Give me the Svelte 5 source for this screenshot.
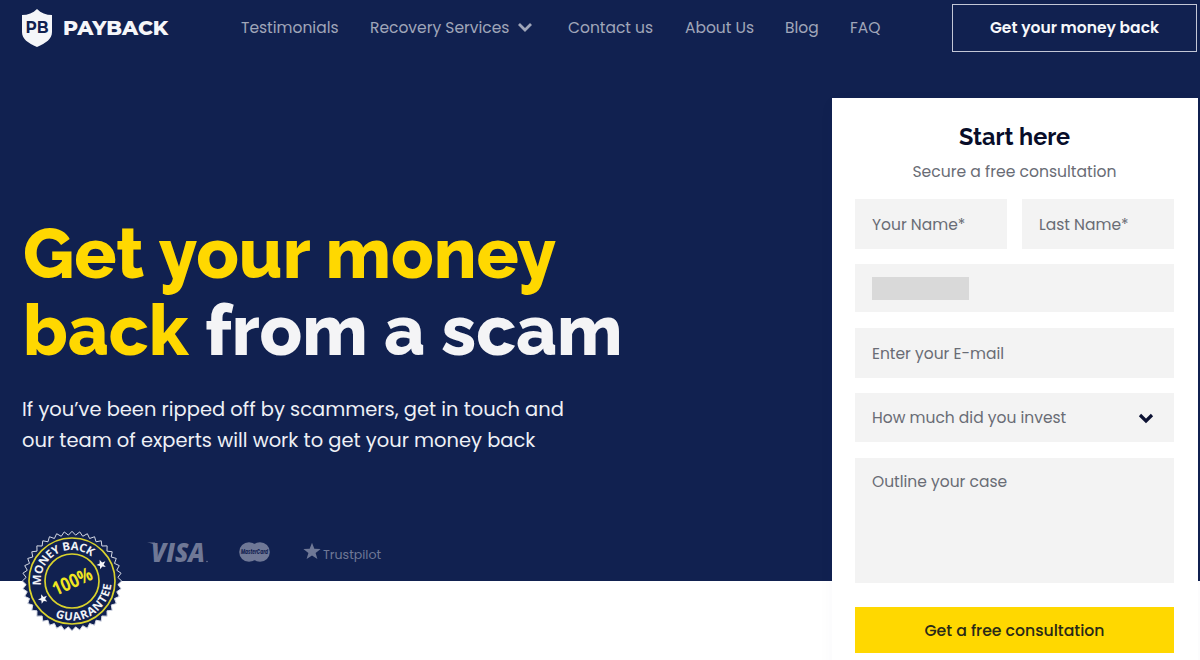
<script>
  const links = [
    { label: 'Testimonials', name: 'testimonials' },
    { label: 'Recovery Services', name: 'services', menu: true },
    { label: 'Contact us', name: 'contact' },
    { label: 'About Us', name: 'about' },
    { label: 'Blog', name: 'blog' },
    { label: 'FAQ', name: 'faq' }
  ];

  let firstName = $state('');
  let lastName = $state('');
  let email = $state('');
  let message = $state('');

  // Wavy edge of the guarantee seal
  function sealEdge(teeth, outer, inner) {
    let d = '';
    for (let i = 0; i < teeth * 2; i++) {
      const angle = (i * Math.PI) / teeth;
      const r = i % 2 ? inner : outer;
      d += `${i ? 'L' : 'M'}${(50 + r * Math.cos(angle)).toFixed(2)} ${(50 + r * Math.sin(angle)).toFixed(2)}`;
    }
    return d + 'Z';
  }

  const star = 'M0-5 1.3-1.6 4.8-1.5 2 .7 3 4 0 2.1-3 4-2 .7-4.8-1.5-1.3-1.6Z';
</script>

<div class="page">
  <div class="hero">
    <header>
      <a class="logo" href="#home">
        <svg width="32" height="40" viewBox="0 0 32 40">
          <path d="M16 1C12 5 7 7 1 7v17c0 7 6 11 15 15 9-4 15-8 15-15V7C25 7 20 5 16 1Z" fill="#f5f6f9" />
          <text x="16" y="24.5" text-anchor="middle" textLength="23" lengthAdjust="spacingAndGlyphs">PB</text>
        </svg>
        <span>PAYBACK</span>
      </a>
      <nav>
        {#each links as link}
          <a class={link.name} href={'#' + link.name}>
            {link.label}
            {#if link.menu}
              <svg width="16" height="12" viewBox="0 0 16 12">
                <path d="M2 3 8 9l6-6" fill="none" stroke="currentColor" stroke-width="2.8" />
              </svg>
            {/if}
          </a>
        {/each}
      </nav>
      <a class="outline-btn" href="#start">Get your money back</a>
    </header>

    <main>
      <section class="intro">
        <h1>
          Get your money<br />
          back <em>from a scam</em>
        </h1>
        <p>
          If you’ve been ripped off by scammers, get in touch and<br />
          our team of experts will work to get your money back
        </p>

        <div class="trust">
          <svg class="seal" width="102" height="102" viewBox="-1 -1 102 102">
            <path d={sealEdge(40, 49.7, 46)} fill="#112150" stroke="#d6dae6" stroke-width="1" stroke-linejoin="round" />
            <g fill="none" stroke="#d9d22c" stroke-width="1.7">
              <circle cx="50" cy="50" r="43" />
              <circle cx="50" cy="50" r="27" />
            </g>
            <g transform="rotate(-30 50 50)">
              <path id="arc-top" d="M19 50a31 31 0 0 1 62 0" fill="none" />
              <path id="arc-bottom" d="M10.5 50a39.5 39.5 0 0 0 79 0" fill="none" />
              <text class="ring-text">
                <textPath href="#arc-top" startOffset="50%" text-anchor="middle" textLength="74">MONEY BACK</textPath>
              </text>
              <text class="ring-text">
                <textPath href="#arc-bottom" startOffset="50%" text-anchor="middle" textLength="76">GUARANTEE</textPath>
              </text>
            </g>
            <path d={star} transform="translate(79.5 33.5) rotate(-22)" fill="#f5f6f9" />
            <path d={star} transform="translate(21 68) rotate(-22)" fill="#f5f6f9" />
            <text class="percent" x="50" y="57" transform="rotate(-24 50 50)" text-anchor="middle" textLength="42" lengthAdjust="spacingAndGlyphs">100%</text>
          </svg>

          <svg class="visa" width="62" height="24" viewBox="0 0 62 24">
            <path d="M0 1.5h8l3 7-1-3C7 3 4 2 0 1.5Z" />
            <text x="4" y="21" textLength="54" lengthAdjust="spacingAndGlyphs">VISA</text>
            <circle cx="60" cy="20.5" r=".8" />
          </svg>

          <svg class="mastercard" width="31" height="20" viewBox="0 0 31 20">
            <circle cx="10" cy="10" r="9.8" />
            <circle cx="21" cy="10" r="9.8" />
            <text x="15.5" y="12.2" text-anchor="middle" textLength="27" lengthAdjust="spacingAndGlyphs">MasterCard</text>
          </svg>

          <div class="trustpilot">
            <svg width="18" height="18" viewBox="-5 -5.2 10 9.6">
              <path d={star} />
            </svg>
            <span>Trustpilot</span>
          </div>
        </div>
      </section>

      <form id="start" onsubmit={(e) => e.preventDefault()}>
        <h2>Start here</h2>
        <p class="subtitle">Secure a free consultation</p>
        <div class="names">
          <input class="field" placeholder="Your Name*" bind:value={firstName} />
          <input class="field" placeholder="Last Name*" bind:value={lastName} />
        </div>
        <div class="field phone"><span></span></div>
        <input class="field email" type="email" placeholder="Enter your E-mail" bind:value={email} />
        <button class="field amount" type="button">
          <span>How much did you invest</span>
          <svg width="16" height="12" viewBox="0 0 16 12">
            <path d="M2 3 8 9l6-6" fill="none" stroke="#0c1233" stroke-width="3.2" />
          </svg>
        </button>
        <textarea class="field" placeholder="Outline your case" bind:value={message}></textarea>
        <button class="submit" type="submit">Get a free consultation</button>
      </form>
    </main>
  </div>
</div>

<style>
  :global(body) {
    background: #fff;
  }

  .page {
    width: 1200px;
    height: 660px;
    overflow: hidden;
    font-family: Poppins, Inter, sans-serif;
  }

  .page,
  .page * {
    box-sizing: border-box;
  }

  .hero {
    height: 581px;
    background: #112150;
  }

  svg {
    flex: none;
    overflow: visible;
  }

  a {
    color: inherit;
    text-decoration: none;
  }

  h1,
  h2,
  p {
    margin: 0;
  }

  header {
    display: flex;
    align-items: center;
    height: 56px;
    padding: 0 3px 0 21px;
  }

  .logo {
    display: flex;
    align-items: center;
    gap: 10px;
    width: 220px;
    color: #f5f6f9;
    font-family: Montserrat, Inter, sans-serif;
    font-size: 20.5px;
    font-weight: 800;
  }

  .logo span {
    margin-top: -2px;
  }

  .logo text {
    fill: #112150;
    font-size: 17px;
    font-weight: 700;
  }

  nav {
    display: grid;
    grid-template-columns: 129px 198px 117px 100px 65px 31px;
    margin-top: -2px;
    color: #a0a6b9;
    font-size: 15.5px;
    white-space: nowrap;
  }

  nav svg {
    margin-left: 3px;
  }

  .outline-btn {
    display: flex;
    align-items: center;
    justify-content: center;
    width: 245px;
    height: 48px;
    margin-left: auto;
    padding-bottom: 2px;
    border: 1px solid #c3c7d6;
    color: #f7f8fb;
    font-size: 15.5px;
    font-weight: 600;
  }

  main {
    display: flex;
    justify-content: space-between;
    padding: 42px 2px 0 22px;
  }

  .intro {
    padding-top: 117px;
    white-space: nowrap;
  }

  h1 {
    padding-left: 1px;
    color: #ffd800;
    font-family: Raleway, Inter, sans-serif;
    font-size: 70px;
    font-weight: 800;
    line-height: 77px;
  }

  h1 em {
    color: #f4f4f6;
    font-style: normal;
  }

  .intro p {
    margin-top: 25px;
    color: #eef0f6;
    font-size: 19.47px;
    line-height: 31px;
  }

  .trust {
    display: flex;
    margin-top: 73px;
  }

  .seal {
    margin: 1px 0 0 -1px;
  }

  .ring-text {
    fill: #f0f2f7;
    font-family: "Open Sans", sans-serif;
    font-size: 11.5px;
    font-weight: 700;
  }

  .percent {
    fill: #f0e51f;
    font-family: "Open Sans", sans-serif;
    font-size: 19px;
    font-weight: 700;
  }

  .visa,
  .mastercard,
  .trustpilot {
    color: #6f7896;
    fill: #6f7896;
  }

  .visa {
    margin: 12px 0 0 24px;
  }

  .visa text {
    font-family: "Open Sans", sans-serif;
    font-size: 27px;
    font-style: italic;
    font-weight: 800;
  }

  .mastercard {
    margin: 13px 0 0 30px;
  }

  .mastercard text {
    fill: #112150;
    font-size: 6px;
    font-style: italic;
    font-weight: 700;
  }

  .trustpilot {
    display: flex;
    height: 22px;
    margin: 13px 0 0 33px;
    font-size: 12.6px;
  }

  .trustpilot span {
    margin: 5px 0 0 2px;
    line-height: 16px;
  }

  form {
    width: 366px;
    height: 600px;
    padding: 23px 24px 0 23px;
    background: #fff;
    box-shadow: 0 4px 16px rgba(17, 33, 80, 0.03);
    text-align: center;
  }

  h2 {
    color: #080d29;
    font-family: Raleway, Inter, sans-serif;
    font-size: 23.4px;
    font-weight: 700;
    line-height: 32px;
  }

  .subtitle {
    margin-top: 7px;
    color: #696c75;
    font-size: 15.6px;
    line-height: 24px;
  }

  .names {
    display: grid;
    grid-template-columns: 152px 152px;
    gap: 15px;
    margin-top: 15px;
  }

  .field {
    display: block;
    width: 100%;
    height: 50px;
    padding: 0 17px;
    border: 0;
    border-radius: 0;
    outline: 0;
    background: #f3f3f3;
    color: #696c75;
    font-family: inherit;
    font-size: 15.5px;
    text-align: left;
  }

  .field::placeholder {
    color: #696c75;
    opacity: 1;
  }

  .phone {
    display: flex;
    align-items: center;
    height: 48px;
    margin-top: 15px;
  }

  .phone span {
    width: 97px;
    height: 23px;
    background: #d9d9d9;
  }

  .email {
    margin-top: 16px;
  }

  .amount {
    display: flex;
    align-items: center;
    justify-content: space-between;
    height: 49px;
    margin-top: 15px;
    padding-right: 20px;
  }

  textarea.field {
    height: 125px;
    margin-top: 16px;
    padding-top: 12px;
    line-height: 24px;
    resize: none;
  }

  .submit {
    width: 100%;
    height: 46px;
    margin-top: 24px;
    border: 0;
    background: #ffd800;
    color: #292918;
    font-family: inherit;
    font-size: 15.7px;
    font-weight: 500;
  }
</style>
